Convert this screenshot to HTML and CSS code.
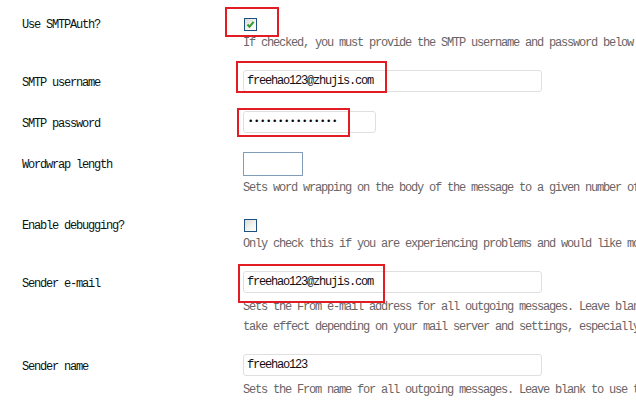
FILE: index.html
```html
<!DOCTYPE html>
<html>
<head>
<meta charset="utf-8">
<link rel="stylesheet" href="styles.css">
</head>
<body>
<div class="form">
  <div class="row row-first">
    <div class="label">Use SMTPAuth?</div>
    <div class="field">
      <span class="checkbox checked"><svg width="11" height="11" viewBox="0 0 11 11"><path d="M2.5 5.5 L4.5 7.8 L8.6 2.8" fill="none" stroke="#2f9e2a" stroke-width="2"/></svg></span>
      <span class="mark mark-auth"></span>
    </div>
    <div class="desc">If checked, you must provide the SMTP username and password below</div>
  </div>
  <div class="row">
    <div class="label">SMTP username</div>
    <div class="field">
      <div class="input wide">freehao123@zhujis.com</div>
      <span class="mark mark-user"></span>
    </div>
  </div>
  <div class="row">
    <div class="label">SMTP password</div>
    <div class="field">
      <div class="input pass">&#8226;&#8226;&#8226;&#8226;&#8226;&#8226;&#8226;&#8226;&#8226;&#8226;&#8226;&#8226;&#8226;&#8226;&#8226;</div>
      <span class="mark mark-pass"></span>
    </div>
  </div>
  <div class="row">
    <div class="label">Wordwrap length</div>
    <div class="field">
      <div class="input short"></div>
    </div>
    <div class="desc">Sets word wrapping on the body of the message to a given number of</div>
  </div>
  <div class="row row-check">
    <div class="label">Enable debugging?</div>
    <div class="field">
      <span class="checkbox"></span>
    </div>
    <div class="desc">Only check this if you are experiencing problems and would like mo</div>
  </div>
  <div class="row">
    <div class="label">Sender e-mail</div>
    <div class="field">
      <div class="input wide">freehao123@zhujis.com</div>
      <span class="mark mark-sender"></span>
    </div>
    <div class="desc">Sets the From e-mail address for all outgoing messages. Leave blan<br>take effect depending on your mail server and settings, especially</div>
  </div>
  <div class="row">
    <div class="label">Sender name</div>
    <div class="field">
      <div class="input wide">freehao123</div>
    </div>
    <div class="desc">Sets the From name for all outgoing messages. Leave blank to use t</div>
  </div>
</div>
</body>
</html>
```
FILE: styles.css
```css
html, body {
  margin: 0;
  padding: 0;
  background: #fff;
  overflow: hidden;
  width: 636px;
  height: 416px;
}
body {
  font-family: "Liberation Mono", "DejaVu Sans Mono", monospace;
  font-size: 12px;
  letter-spacing: -1.2px;
  color: #222;
}
.form {
  padding-left: 22px;
}
.row {
  display: grid;
  grid-template-columns: 221px auto;
  padding: 8px 0 9px;
}
.row-first {
  padding-top: 18px;
}
.label {
  grid-column: 1;
  grid-row: 1;
  align-self: center;
  line-height: 11px;
  padding-top: 2px;
  color: #111;
}
.field {
  grid-column: 2;
  grid-row: 1;
  position: relative;
  display: flex;
  align-items: flex-start;
}
.desc {
  grid-column: 2;
  grid-row: 2;
  margin-top: 2px;
  line-height: 20px;
  color: #666;
  white-space: nowrap;
}
.checkbox {
  display: block;
  box-sizing: border-box;
  width: 13px;
  height: 13px;
  margin-left: 1px;
  border: 1px solid #1c5180;
  background: linear-gradient(135deg, #dcdcd5 0%, #f4f4f1 60%, #ffffff 100%);
}
.row-check {
  padding-top: 12px;
}
.checkbox svg {
  display: block;
}
.input {
  box-sizing: border-box;
  height: 22px;
  border: 1px solid #dfdfdf;
  border-radius: 3px;
  padding: 0 3px;
  line-height: 20px;
  color: #111;
  background: #fff;
}
.row .field .input {
  margin-bottom: 2px;
}
.wide {
  width: 299px;
}
.pass {
  width: 133px;
  padding-left: 4px;
  color: #000;
  font-size: 9px;
  letter-spacing: 0.6px;
  line-height: 21px;
}
.short {
  width: 60px;
  height: 24px;
  border-radius: 0;
  border-color: #7f9db9;
}
.row .field .short {
  margin-bottom: 0;
}
.mark {
  position: absolute;
  box-sizing: border-box;
  border: 2px solid #e31b23;
}
.mark-auth {
  left: -18px;
  top: -11px;
  width: 54px;
  height: 30px;
}
.mark-user {
  left: -7px;
  top: -9px;
  width: 151px;
  height: 32px;
}
.mark-pass {
  left: -6px;
  top: -3px;
  width: 113px;
  height: 29px;
}
.mark-sender {
  left: -5px;
  top: -7px;
  width: 147px;
  height: 39px;
}
```
